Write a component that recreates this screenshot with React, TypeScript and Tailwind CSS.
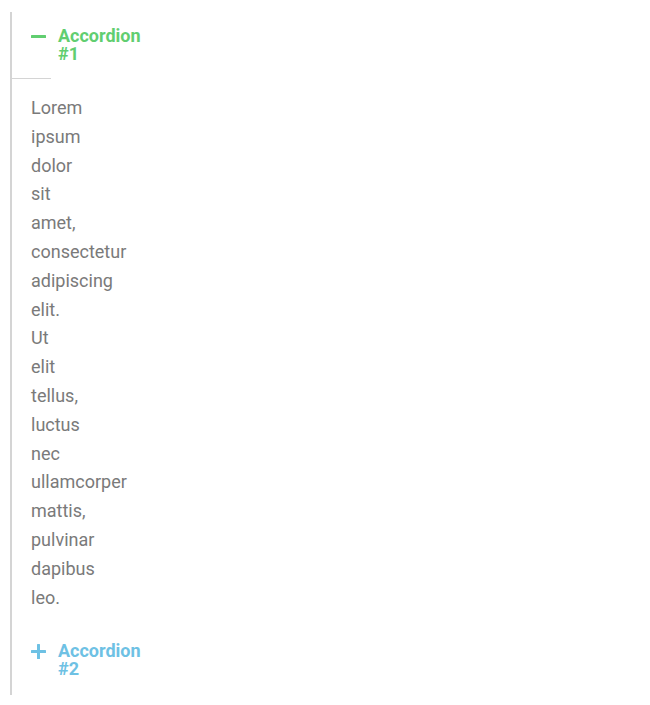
import React, { useState } from 'react';

interface Item {
  title: string,
  content: string,
}

const items: Item[] = [
  {
    title: 'Accordion #1',
    content: 'Lorem ipsum dolor sit amet, consectetur adipiscing elit. Ut elit tellus, luctus nec ullamcorper mattis, pulvinar dapibus leo.',
  },
  {
    title: 'Accordion #2',
    content: 'Lorem ipsum dolor sit amet, consectetur adipiscing elit. Ut elit tellus, luctus nec ullamcorper mattis, pulvinar dapibus leo.',
  },
];

const Minus = () => (
  <svg width="15" height="15" viewBox="0 0 15 15" className="block">
    <rect x="0" y="6" width="15" height="3" rx="0.5" fill="currentColor" />
  </svg>
);

const Plus = () => (
  <svg width="15" height="15" viewBox="0 0 15 15" className="block">
    <rect x="0" y="6" width="15" height="3" rx="0.5" fill="currentColor" />
    <rect x="6" y="0" width="3" height="15" rx="0.5" fill="currentColor" />
  </svg>
);

const App: React.FC = () => {
  const [active, setActive] = useState<number>(0);

  return (
    <div className="min-h-screen bg-white pt-[12px] pl-[10px]" style={{ fontFamily: 'Roboto, "Noto Sans", sans-serif' }}>
      <div className="w-[41px] border-l-2 border-[#d4d4d4] pb-[2px]">
        {items.map((item, i) => {
          const open = active === i;
          return (
            <div key={item.title}>
              <div
                className={`flex cursor-pointer pl-[19px] pr-[20px] py-[15px] text-[18px] font-bold leading-[18px] ${open ? 'border-b border-[#d4d4d4] text-[#61ce70]' : 'text-[#6ec1e4]'}`}
                onClick={() => setActive(open ? -1 : i)}
              >
                <span className="mr-[12px] shrink-0 pt-[2px]">{open ? <Minus /> : <Plus />}</span>
                <span className="w-0">{item.title.split(' ').map((w) => <span key={w} className="block whitespace-nowrap">{w}</span>)}</span>
              </div>
              {open &&
                <div className="pl-[19px] pr-[20px] py-[15px] text-[18px] leading-[28.8px] text-[#7a7a7a]">
                  {item.content.split(' ').map((w, j) => <span key={j} className="block whitespace-nowrap">{w}</span>)}
                </div>
              }
            </div>
          );
        })}
      </div>
    </div>
  );
};

export default App;
